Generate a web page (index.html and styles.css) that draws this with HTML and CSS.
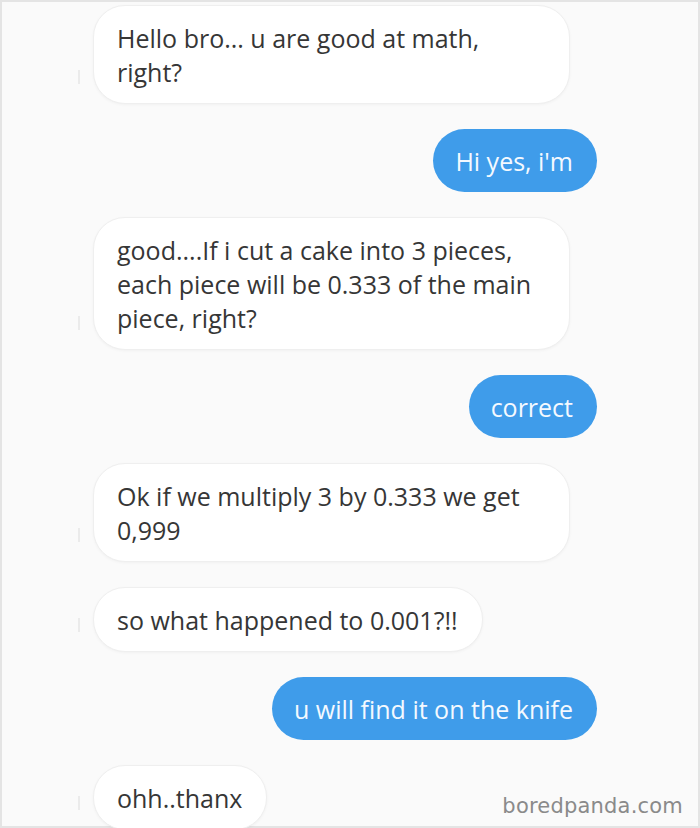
FILE: index.html
```html
<!DOCTYPE html>
<html lang="en">
<head>
    <meta charset="UTF-8">
    <meta name="viewport" content="width=device-width, initial-scale=1.0">
    <title>Chat</title>
    <link rel="stylesheet" href="styles.css">
</head>
<body>
    <div class="chat">
        <!-- Messages -->
        <div class="row them">
            <span class="mark"></span>
            <div class="bubble">Hello bro... u are good at math, right?</div>
        </div>
        <div class="row me">
            <div class="bubble">Hi yes, i'm</div>
        </div>
        <div class="row them">
            <span class="mark"></span>
            <div class="bubble">good....If i cut a cake into 3 pieces, each piece will be 0.333 of the main piece, right?</div>
        </div>
        <div class="row me">
            <div class="bubble">correct</div>
        </div>
        <div class="row them">
            <span class="mark"></span>
            <div class="bubble">Ok if we multiply 3 by 0.333 we get 0,999</div>
        </div>
        <div class="row them">
            <span class="mark"></span>
            <div class="bubble">so what happened to 0.001?!!</div>
        </div>
        <div class="row me">
            <div class="bubble">u will find it on the knife</div>
        </div>
        <div class="row them">
            <span class="mark"></span>
            <div class="bubble">ohh..thanx</div>
        </div>

        <div class="watermark">boredpanda.com</div>
    </div>
</body>
</html>
```

FILE: styles.css
```css
body {
    margin: 0;
    background: #fafafa;
    font-family: "Open Sans", Arial, sans-serif;
}

.chat {
    position: relative;
    box-sizing: border-box;
    width: 700px;
    height: 828px;
    border: 2px solid #e4e4e4;
    background: #fafafa;
    padding: 3px 0 0 0;
    display: flex;
    flex-direction: column;
    gap: 25px;
}

.row {
    display: flex;
    align-items: flex-end;
}

.row.them {
    padding-left: 76px;
}

.row.me {
    justify-content: flex-end;
    padding-right: 101px;
}

/* petit reste d'avatar a gauche */
.mark {
    width: 2px;
    height: 14px;
    background: #ebebeb;
    margin: 0 13px 20px 0;
    flex-shrink: 0;
}

.bubble {
    box-sizing: border-box;
    max-width: 477px;
    padding: 15px 24px 14px 23px;
    font-size: 25px;
    line-height: 34px;
    border-radius: 32px;
}

.them .bubble {
    background: #ffffff;
    color: #363636;
    border: 1px solid #efefef;
    box-shadow: 0 1px 3px rgba(0, 0, 0, 0.04);
}

.me .bubble {
    background: #3f9cea;
    color: #f4f9ff;
    padding-left: 22px;
}

.watermark {
    position: absolute;
    right: 15px;
    bottom: 8px;
    font-family: "DejaVu Sans", Verdana, sans-serif;
    font-size: 21px;
    color: #8a8a8a;
    letter-spacing: 0.2px;
}
```
